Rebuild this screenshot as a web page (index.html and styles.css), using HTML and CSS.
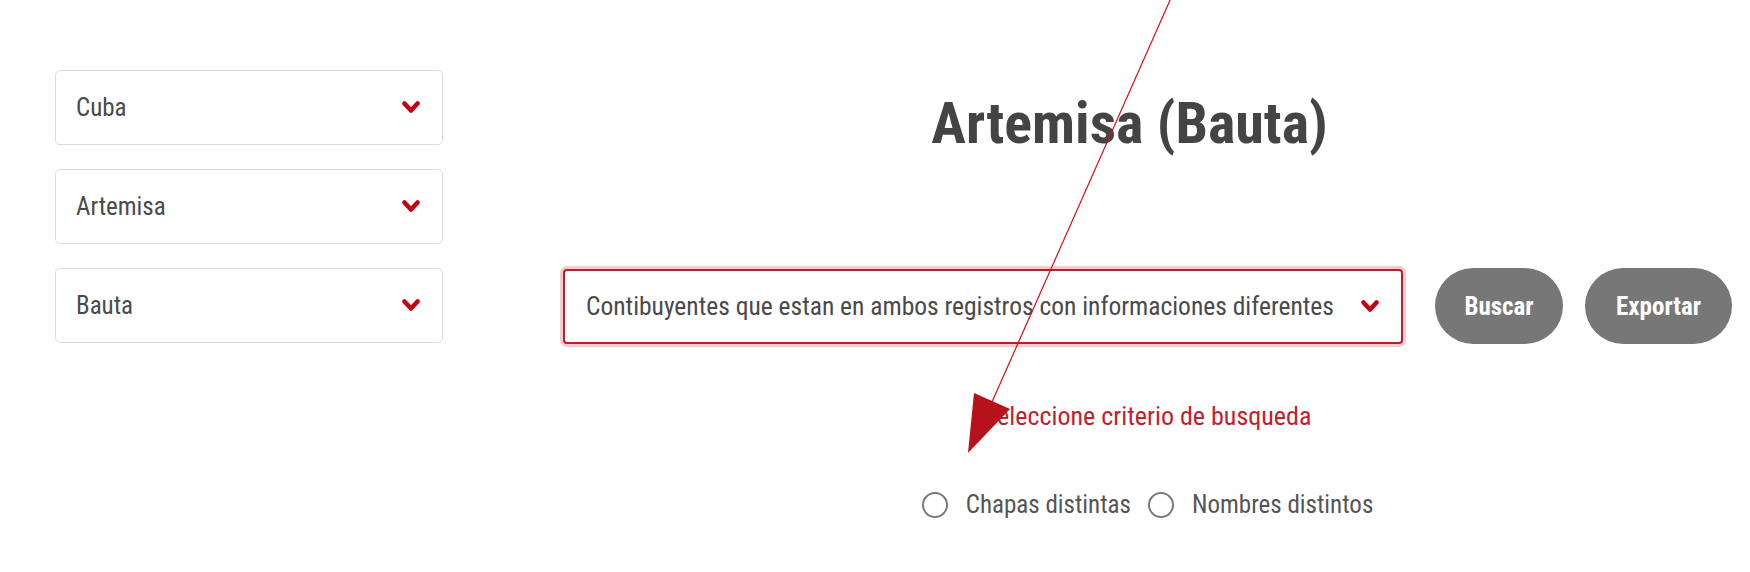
FILE: index.html
```html
<!DOCTYPE html>
<html lang="es">
<head>
<meta charset="utf-8">
<title>Artemisa (Bauta)</title>
<link rel="stylesheet" href="styles.css">
</head>
<body>
<div class="page">
  <aside class="filters">
    <div class="select"><span class="select-text">Cuba</span><svg class="chev" viewBox="0 0 18 13"><polyline points="2.5,2.5 9,9.5 15.5,2.5"/></svg></div>
    <div class="select"><span class="select-text">Artemisa</span><svg class="chev" viewBox="0 0 18 13"><polyline points="2.5,2.5 9,9.5 15.5,2.5"/></svg></div>
    <div class="select"><span class="select-text">Bauta</span><svg class="chev" viewBox="0 0 18 13"><polyline points="2.5,2.5 9,9.5 15.5,2.5"/></svg></div>
  </aside>
  <main class="content">
    <h1 class="title">Artemisa (Bauta)</h1>
    <div class="search-row">
      <div class="select select-main"><span class="select-text">Contibuyentes que estan en ambos registros con informaciones diferentes</span><svg class="chev" viewBox="0 0 18 13"><polyline points="2.5,2.5 9,9.5 15.5,2.5"/></svg></div>
      <button class="btn btn-buscar">Buscar</button>
      <button class="btn btn-exportar">Exportar</button>
    </div>
    <p class="hint">Seleccione criterio de busqueda</p>
    <div class="radios">
      <label class="radio-opt"><span class="radio"></span>Chapas distintas</label>
      <label class="radio-opt"><span class="radio"></span>Nombres distintos</label>
    </div>
  </main>
  <svg class="annotation" width="1750" height="572" viewBox="0 0 1750 572">
    <line x1="1171" y1="-2" x2="992" y2="402" stroke="#d0101c" stroke-width="1.2"/>
    <polygon points="968,453 974,393 1010,409" fill="#b5121b"/>
  </svg>
</div>
</body>
</html>
```

FILE: styles.css
```css
html, body {
  margin: 0;
  padding: 0;
  background: #ffffff;
}

body {
  font-family: "Roboto Condensed", "Ubuntu", "Liberation Sans", sans-serif;
  color: #4a4a4a;
}

.page {
  position: relative;
  width: 1750px;
  height: 572px;
  display: flex;
  overflow: hidden;
}

.filters {
  width: 388px;
  margin-left: 55px;
  padding-top: 70px;
  display: flex;
  flex-direction: column;
  gap: 24px;
}

.select {
  box-sizing: border-box;
  height: 75px;
  display: flex;
  align-items: center;
  justify-content: space-between;
  padding: 0 22px 0 20px;
  border: 1px solid #dcdcdc;
  border-radius: 5px;
  background: #fff;
}

.select-text {
  font-size: 25px;
  color: #4a4a4a;
  white-space: nowrap;
}

.chev {
  width: 18px;
  height: 13px;
  flex: none;
}

.chev polyline {
  fill: none;
  stroke: #c40010;
  stroke-width: 4.5;
  stroke-linecap: round;
  stroke-linejoin: round;
}

.content {
  margin-left: 120px;
  width: 1169px;
  padding-top: 87px;
  display: flex;
  flex-direction: column;
  align-items: center;
}

.title {
  margin: 0;
  padding-right: 36px;
  font-size: 58px;
  line-height: 72px;
  font-weight: bold;
  color: #444444;
}

.search-row {
  margin-top: 109px;
  align-self: stretch;
  display: flex;
  align-items: center;
}

.select-main {
  width: 840px;
  height: 75px;
  padding: 0 22px 0 21px;
  border: 2px solid #b3212b;
  border-radius: 4px;
  box-shadow: 0 0 0 3px rgba(226, 82, 92, 0.3);
}

.select-main .select-text {
  font-size: 25.5px;
}

.btn {
  height: 76px;
  border: none;
  border-radius: 38px;
  background: #777777;
  color: #ffffff;
  font-family: inherit;
  font-weight: bold;
  font-size: 25px;
  padding: 0;
}

.btn-buscar {
  width: 128px;
  margin-left: 32px;
}

.btn-exportar {
  width: 147px;
  margin-left: 22px;
}

.hint {
  margin: 55px 0 0;
  font-size: 26px;
  line-height: 34px;
  color: #c0222d;
}

.radios {
  margin-top: 56px;
  display: flex;
  align-items: center;
  gap: 17px;
}

.radio-opt {
  display: flex;
  align-items: center;
  gap: 18px;
  font-size: 25px;
  line-height: 32px;
  color: #555555;
}

.radio {
  box-sizing: border-box;
  width: 26px;
  height: 26px;
  border: 2px solid #7a7a7a;
  border-radius: 50%;
}

.annotation {
  position: absolute;
  left: 0;
  top: 0;
  pointer-events: none;
}
```
